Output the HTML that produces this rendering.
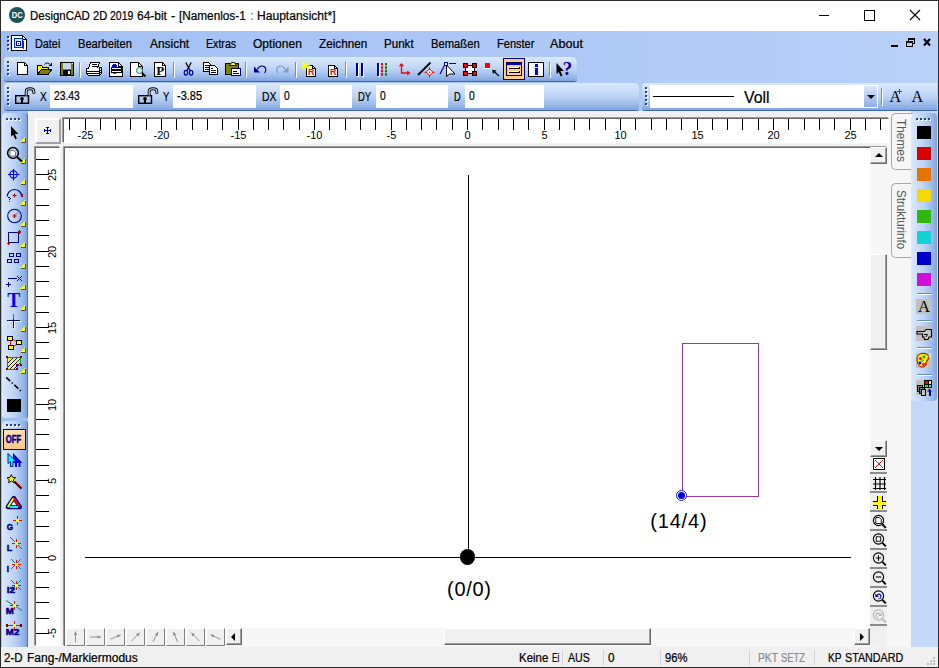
<!DOCTYPE html><html lang="de"><head><meta charset="utf-8"><title>DesignCAD 2D 2019 64-bit - [Namenlos-1 : Hauptansicht*]</title><style>*{box-sizing:border-box;margin:0;padding:0}
html,body{width:939px;height:668px;overflow:hidden;background:#fff}
body{position:relative;font-family:"Liberation Sans",sans-serif;font-size:12px;color:#000}
.a{position:absolute}
.t{position:absolute;white-space:nowrap;line-height:1;transform-origin:0 0;-webkit-text-stroke:.22px currentColor}
#frame{left:0;top:0;width:939px;height:668px;border:1px solid #2b2b2b;border-right-width:1px;z-index:50;pointer-events:none}
#title{left:1px;top:1px;width:937px;height:30px;background:#fff}
.band{position:absolute;left:1px;width:937px;background:linear-gradient(90deg,#a2bff4 0%,#abc6f6 45%,#b9d1f8 100%)}
.tb{position:absolute;border-radius:4px 5px 3px 3px;background:linear-gradient(180deg,#dbe9fc 0%,#cfe0fa 20%,#bdd3f6 50%,#9dbceb 78%,#7fa4de 100%);box-shadow:0 1px 0 #3f66ad}
.vtb{position:absolute;border-radius:4px 3px 2px 3px;background:linear-gradient(90deg,#dbe9fc 0%,#cfe0fa 20%,#bdd3f6 50%,#9dbceb 78%,#7fa4de 100%);box-shadow:1px 0 0 #4a72b8}
.inp{position:absolute;background:#fff}
.gd{position:absolute;width:2px;height:2px;background:#27408b;box-shadow:1px 1px 0 #fff}
.sepv{position:absolute;width:1px;height:15px;background:#6a8ccb;box-shadow:1px 1px 0 #fff}
.seph{position:absolute;height:1px;width:15px;background:#6a8ccb;box-shadow:0 1px 0 #fff}
.tri{position:absolute;width:0;height:0;border-left:5.5px solid transparent;border-bottom:5.5px solid #ffff00;filter:drop-shadow(.8px .8px 0 #505050)}
.btn3{position:absolute;background:#f0f0f0;border:1px solid;border-color:#fff #696969 #696969 #fff;box-shadow:inset -1px -1px 0 #a0a0a0}
.sunk{position:absolute;background:#fff;border-top:1px solid #696969;border-left:1px solid #696969}
.sw{position:absolute;left:917px;width:14px;height:13px}
.tab{position:absolute;left:891px;width:21px;border:1px solid #a8a8a8;border-right:none;border-radius:5px 0 0 5px;background:#f6f6f6}
.vt{position:absolute;white-space:nowrap;line-height:1;font-size:12px;color:#555;transform-origin:0 0}
.rl{position:absolute;white-space:nowrap;line-height:1;font-size:11px}
.sbs{position:absolute;top:650px;width:1px;height:15px;background:#d4d4d4}
.ib{position:absolute;left:870px;width:17px;height:19px;background:#f0f0f0;border-bottom:2px solid #8c8c8c}
svg{position:absolute;left:0;top:0;overflow:visible}
.sunk2{position:absolute;background:#fff;border:1px solid #6a6a6a;border-right-color:#fff;border-bottom-color:#fff;box-shadow:-1px -1px 0 #9a9a9a, 1px 1px 0 #f6f6f6}
</style></head><body>
<div class="a" id="title"></div>
<div class="t" style="left:30.00px;top:9.64px;font-size:12px;transform:scaleX(0.9553);">DesignCAD</div>
<div class="t" style="left:92.60px;top:9.64px;font-size:12px;transform:scaleX(0.9310);">2D</div>
<div class="t" style="left:109.70px;top:9.64px;font-size:12px;transform:scaleX(0.8727);">2019</div>
<div class="t" style="left:136.60px;top:9.64px;font-size:12px;transform:scaleX(0.9967);">64-bit</div>
<div class="t" style="left:171.30px;top:9.64px;font-size:12px;transform:scaleX(1.0945);">-</div>
<div class="t" style="left:179.30px;top:9.64px;font-size:12px;transform:scaleX(0.9803);">[Namenlos-1</div>
<div class="t" style="left:250.90px;top:9.64px;font-size:12px;transform:scaleX(0.5952);">:</div>
<div class="t" style="left:257.20px;top:9.64px;font-size:12px;transform:scaleX(1.0056);">Hauptansicht*]</div>
<div class="band" style="top:31px;height:80px"></div>
<div class="t" style="left:35.30px;top:38.44px;font-size:12px;transform:scaleX(0.9029);">Datei</div>
<div class="t" style="left:78.30px;top:38.44px;font-size:12px;transform:scaleX(0.9273);">Bearbeiten</div>
<div class="t" style="left:149.80px;top:38.44px;font-size:12px;transform:scaleX(0.9959);">Ansicht</div>
<div class="t" style="left:205.70px;top:38.44px;font-size:12px;transform:scaleX(0.8848);">Extras</div>
<div class="t" style="left:252.70px;top:38.44px;font-size:12px;transform:scaleX(1.0037);">Optionen</div>
<div class="t" style="left:318.60px;top:38.44px;font-size:12px;transform:scaleX(0.9761);">Zeichnen</div>
<div class="t" style="left:384.30px;top:38.44px;font-size:12px;transform:scaleX(0.9654);">Punkt</div>
<div class="t" style="left:431.00px;top:38.44px;font-size:12px;transform:scaleX(0.9362);">Bemaßen</div>
<div class="t" style="left:496.90px;top:38.44px;font-size:12px;transform:scaleX(0.9194);">Fenster</div>
<div class="t" style="left:550.30px;top:38.44px;font-size:12px;transform:scaleX(1.0484);">About</div>
<div class="gd" style="left:7px;top:36px"></div>
<div class="gd" style="left:7px;top:40px"></div>
<div class="gd" style="left:7px;top:44px"></div>
<div class="gd" style="left:7px;top:48px"></div>
<div class="tb" style="left:4px;top:57px;width:573px;height:24px"></div>
<div class="tb" style="left:4px;top:83px;width:635px;height:27px"></div>
<div class="tb" style="left:642px;top:83px;width:295px;height:27px;border-radius:4px 0 0 3px"></div>
<div class="gd" style="left:7px;top:61px"></div>
<div class="gd" style="left:7px;top:65px"></div>
<div class="gd" style="left:7px;top:69px"></div>
<div class="gd" style="left:7px;top:73px"></div>
<div class="gd" style="left:7px;top:87px"></div>
<div class="gd" style="left:645px;top:87px"></div>
<div class="gd" style="left:7px;top:91px"></div>
<div class="gd" style="left:645px;top:91px"></div>
<div class="gd" style="left:7px;top:95px"></div>
<div class="gd" style="left:645px;top:95px"></div>
<div class="gd" style="left:7px;top:99px"></div>
<div class="gd" style="left:645px;top:99px"></div>
<div class="gd" style="left:7px;top:103px"></div>
<div class="gd" style="left:645px;top:103px"></div>
<div class="sepv" style="left:79px;top:62px"></div>
<div class="sepv" style="left:173px;top:62px"></div>
<div class="sepv" style="left:245px;top:62px"></div>
<div class="sepv" style="left:295px;top:62px"></div>
<div class="sepv" style="left:345px;top:62px"></div>
<div class="sepv" style="left:549px;top:62px"></div>
<div class="inp" style="left:50px;top:85px;width:83px;height:23px"></div>
<div class="inp" style="left:173px;top:85px;width:83px;height:23px"></div>
<div class="inp" style="left:280px;top:85px;width:72px;height:23px"></div>
<div class="inp" style="left:376px;top:85px;width:72px;height:23px"></div>
<div class="inp" style="left:465px;top:85px;width:79px;height:23px"></div>
<div class="inp" style="left:650px;top:85px;width:228px;height:23px"></div>
<div class="a" style="left:864px;top:86px;width:13px;height:21px;background:linear-gradient(180deg,#dbe9fc,#a9c4ee 60%,#8fb0e4)"></div>
<div class="a" style="left:867px;top:95px;width:0;height:0;border-left:4px solid transparent;border-right:4px solid transparent;border-top:4px solid #000"></div>
<div class="sepv" style="left:881px;top:88px;height:17px"></div>
<div class="t" style="left:39.60px;top:90.94px;font-size:12px;transform:scaleX(0.8396);">X</div>
<div class="t" style="left:162.60px;top:90.94px;font-size:12px;transform:scaleX(0.7895);">Y</div>
<div class="t" style="left:261.90px;top:90.94px;font-size:12px;transform:scaleX(0.8633);">DX</div>
<div class="t" style="left:358.20px;top:90.94px;font-size:12px;transform:scaleX(0.7914);">DY</div>
<div class="t" style="left:454.10px;top:90.94px;font-size:12px;transform:scaleX(0.7755);">D</div>
<div class="t" style="left:53.50px;top:90.14px;font-size:12px;transform:scaleX(0.8616);">23.43</div>
<div class="t" style="left:176.90px;top:90.14px;font-size:12px;transform:scaleX(0.9137);">-3.85</div>
<div class="t" style="left:283.90px;top:90.14px;font-size:12px;transform:scaleX(0.8559);">0</div>
<div class="t" style="left:379.70px;top:90.14px;font-size:12px;transform:scaleX(0.8559);">0</div>
<div class="t" style="left:468.80px;top:90.14px;font-size:12px;transform:scaleX(0.8559);">0</div>
<div class="t" style="left:743.80px;top:88.61px;font-size:17px;transform:scaleX(0.9317);">Voll</div>
<div class="a" style="left:653px;top:96px;width:81px;height:1px;background:#000"></div>
<div class="a" style="left:1px;top:647px;width:937px;height:20px;background:#f0f0f0"></div>
<div class="t" style="left:4.30px;top:651.84px;font-size:12px;transform:scaleX(0.9576);">2-D</div>
<div class="t" style="left:26.90px;top:651.84px;font-size:12px;transform:scaleX(1.0009);">Fang-/Markiermodus</div>
<div class="t" style="left:519.00px;top:651.84px;font-size:12px;transform:scaleX(0.9538);">Keine</div>
<div class="t" style="left:551.80px;top:651.84px;font-size:12px;transform:scaleX(0.6835);">Ei</div>
<div class="t" style="left:567.50px;top:651.84px;font-size:12px;transform:scaleX(0.8840);">AUS</div>
<div class="t" style="left:608.30px;top:651.84px;font-size:12px;transform:scaleX(0.9760);">0</div>
<div class="t" style="left:665.30px;top:651.84px;font-size:12px;transform:scaleX(0.9333);">96%</div>
<div class="t" style="left:757.80px;top:651.84px;font-size:12px;color:#8c8c8c;transform:scaleX(0.8569);">PKT</div>
<div class="t" style="left:781.00px;top:651.84px;font-size:12px;color:#8c8c8c;transform:scaleX(0.7860);">SETZ</div>
<div class="t" style="left:827.70px;top:651.84px;font-size:12px;transform:scaleX(0.8489);">KP</div>
<div class="t" style="left:844.70px;top:651.84px;font-size:12px;transform:scaleX(0.8940);">STANDARD</div>
<div class="sbs" style="left:562px"></div>
<div class="sbs" style="left:603px"></div>
<div class="sbs" style="left:660px"></div>
<div class="sbs" style="left:749px"></div>
<div class="sbs" style="left:814px"></div>
<div class="a" style="left:933px;top:657px;width:2px;height:2px;background:#bdbdbd"></div>
<div class="a" style="left:930px;top:660px;width:2px;height:2px;background:#bdbdbd"></div>
<div class="a" style="left:933px;top:660px;width:2px;height:2px;background:#bdbdbd"></div>
<div class="a" style="left:927px;top:663px;width:2px;height:2px;background:#bdbdbd"></div>
<div class="a" style="left:930px;top:663px;width:2px;height:2px;background:#bdbdbd"></div>
<div class="a" style="left:933px;top:663px;width:2px;height:2px;background:#bdbdbd"></div>
<div class="a" style="left:1px;top:111px;width:27px;height:536px;background:#a2bff4"></div>
<div class="a" style="left:911px;top:111px;width:27px;height:536px;background:#c4d9f9"></div>
<div class="vtb" style="left:2px;top:113px;width:25px;height:305px"></div>
<div class="vtb" style="left:2px;top:421px;width:25px;height:226px;border-radius:4px 3px 0 0"></div>
<div class="gd" style="left:6px;top:118px"></div>
<div class="gd" style="left:6px;top:424px"></div>
<div class="gd" style="left:10px;top:118px"></div>
<div class="gd" style="left:10px;top:424px"></div>
<div class="gd" style="left:14px;top:118px"></div>
<div class="gd" style="left:14px;top:424px"></div>
<div class="gd" style="left:18px;top:118px"></div>
<div class="gd" style="left:18px;top:424px"></div>
<div class="a" style="left:28px;top:111px;width:863px;height:536px;background:#f0f0f0"></div>
<div class="a" style="left:887px;top:111px;width:24px;height:536px;background:#f6f6f6"></div>
<div class="tab" style="top:113px;height:57px"></div>
<div class="tab" style="top:183px;height:75px"></div>
<div class="vt" style="left:906.5px;top:118.6px;transform:rotate(90deg) scaleX(0.99)">Themes</div>
<div class="vt" style="left:906.5px;top:190px;transform:rotate(90deg) scaleX(0.965)">Strukturinfo</div>
<div class="vtb" style="left:911px;top:113px;width:26px;height:288px;border-radius:5px 4px 4px 4px;box-shadow:none"></div>
<div class="gd" style="left:916px;top:117.5px"></div>
<div class="gd" style="left:920px;top:117.5px"></div>
<div class="gd" style="left:924px;top:117.5px"></div>
<div class="gd" style="left:928px;top:117.5px"></div>
<div class="sw" style="top:126px;background:#000000"></div>
<div class="sw" style="top:147px;background:#d80000"></div>
<div class="sw" style="top:168px;background:#e87400"></div>
<div class="sw" style="top:189px;background:#f5d800"></div>
<div class="sw" style="top:210px;background:#30b810"></div>
<div class="sw" style="top:231px;background:#10d4d4"></div>
<div class="sw" style="top:252px;background:#0000cc"></div>
<div class="sw" style="top:273px;background:#d010d8"></div>
<div class="seph" style="left:917px;top:293px"></div>
<div class="seph" style="left:917px;top:320px"></div>
<div class="seph" style="left:917px;top:347px"></div>
<div class="seph" style="left:917px;top:374px"></div>
<div class="a" style="left:916px;top:299px;width:16px;height:15px;background:#c0c0c0"></div>
<div class="a" style="left:916px;top:326px;width:16px;height:15px;background:#c0c0c0"></div>
<div class="a" style="left:916px;top:353px;width:16px;height:15px;background:#c0c0c0"></div>
<div class="a" style="left:916px;top:380px;width:16px;height:15px;background:#c0c0c0"></div>
<div class="a" style="left:35px;top:118px;width:26px;height:26px;background:#f0f0f0;border:2px solid;border-color:#fff #a0a0a0 #a0a0a0 #fff"></div>
<div class="sunk2" style="left:63px;top:118px;width:826px;height:25px"></div>
<div class="sunk2" style="left:35px;top:147px;width:25px;height:499px"></div>
<div class="sunk2" id="canvas" style="left:64px;top:147px;width:823px;height:499px;border-right:none;border-bottom:none"></div>
<div class="a" style="left:69px;top:119px;width:1px;height:11px;background:#000"></div>
<div class="a" style="left:85px;top:119px;width:1px;height:11px;background:#000"></div>
<div class="rl" style="left:77.6px;top:129.7px">-25</div>
<div class="a" style="left:100px;top:119px;width:1px;height:11px;background:#000"></div>
<div class="a" style="left:115px;top:119px;width:1px;height:11px;background:#000"></div>
<div class="a" style="left:130px;top:119px;width:1px;height:11px;background:#000"></div>
<div class="a" style="left:146px;top:119px;width:1px;height:11px;background:#000"></div>
<div class="a" style="left:161px;top:119px;width:1px;height:11px;background:#000"></div>
<div class="rl" style="left:153.6px;top:129.7px">-20</div>
<div class="a" style="left:176px;top:119px;width:1px;height:11px;background:#000"></div>
<div class="a" style="left:192px;top:119px;width:1px;height:11px;background:#000"></div>
<div class="a" style="left:207px;top:119px;width:1px;height:11px;background:#000"></div>
<div class="a" style="left:222px;top:119px;width:1px;height:11px;background:#000"></div>
<div class="a" style="left:238px;top:119px;width:1px;height:11px;background:#000"></div>
<div class="rl" style="left:230.6px;top:129.7px">-15</div>
<div class="a" style="left:253px;top:119px;width:1px;height:11px;background:#000"></div>
<div class="a" style="left:268px;top:119px;width:1px;height:11px;background:#000"></div>
<div class="a" style="left:283px;top:119px;width:1px;height:11px;background:#000"></div>
<div class="a" style="left:299px;top:119px;width:1px;height:11px;background:#000"></div>
<div class="a" style="left:314px;top:119px;width:1px;height:11px;background:#000"></div>
<div class="rl" style="left:306.6px;top:129.7px">-10</div>
<div class="a" style="left:329px;top:119px;width:1px;height:11px;background:#000"></div>
<div class="a" style="left:345px;top:119px;width:1px;height:11px;background:#000"></div>
<div class="a" style="left:360px;top:119px;width:1px;height:11px;background:#000"></div>
<div class="a" style="left:375px;top:119px;width:1px;height:11px;background:#000"></div>
<div class="a" style="left:391px;top:119px;width:1px;height:11px;background:#000"></div>
<div class="rl" style="left:386.6px;top:129.7px">-5</div>
<div class="a" style="left:406px;top:119px;width:1px;height:11px;background:#000"></div>
<div class="a" style="left:421px;top:119px;width:1px;height:11px;background:#000"></div>
<div class="a" style="left:436px;top:119px;width:1px;height:11px;background:#000"></div>
<div class="a" style="left:452px;top:119px;width:1px;height:11px;background:#000"></div>
<div class="a" style="left:467px;top:119px;width:1px;height:11px;background:#000"></div>
<div class="rl" style="left:464.4px;top:129.7px">0</div>
<div class="a" style="left:482px;top:119px;width:1px;height:11px;background:#000"></div>
<div class="a" style="left:498px;top:119px;width:1px;height:11px;background:#000"></div>
<div class="a" style="left:513px;top:119px;width:1px;height:11px;background:#000"></div>
<div class="a" style="left:528px;top:119px;width:1px;height:11px;background:#000"></div>
<div class="a" style="left:544px;top:119px;width:1px;height:11px;background:#000"></div>
<div class="rl" style="left:541.4px;top:129.7px">5</div>
<div class="a" style="left:559px;top:119px;width:1px;height:11px;background:#000"></div>
<div class="a" style="left:574px;top:119px;width:1px;height:11px;background:#000"></div>
<div class="a" style="left:589px;top:119px;width:1px;height:11px;background:#000"></div>
<div class="a" style="left:605px;top:119px;width:1px;height:11px;background:#000"></div>
<div class="a" style="left:620px;top:119px;width:1px;height:11px;background:#000"></div>
<div class="rl" style="left:614.4px;top:129.7px">10</div>
<div class="a" style="left:635px;top:119px;width:1px;height:11px;background:#000"></div>
<div class="a" style="left:651px;top:119px;width:1px;height:11px;background:#000"></div>
<div class="a" style="left:666px;top:119px;width:1px;height:11px;background:#000"></div>
<div class="a" style="left:681px;top:119px;width:1px;height:11px;background:#000"></div>
<div class="a" style="left:697px;top:119px;width:1px;height:11px;background:#000"></div>
<div class="rl" style="left:691.4px;top:129.7px">15</div>
<div class="a" style="left:712px;top:119px;width:1px;height:11px;background:#000"></div>
<div class="a" style="left:727px;top:119px;width:1px;height:11px;background:#000"></div>
<div class="a" style="left:742px;top:119px;width:1px;height:11px;background:#000"></div>
<div class="a" style="left:758px;top:119px;width:1px;height:11px;background:#000"></div>
<div class="a" style="left:773px;top:119px;width:1px;height:11px;background:#000"></div>
<div class="rl" style="left:767.4px;top:129.7px">20</div>
<div class="a" style="left:788px;top:119px;width:1px;height:11px;background:#000"></div>
<div class="a" style="left:804px;top:119px;width:1px;height:11px;background:#000"></div>
<div class="a" style="left:819px;top:119px;width:1px;height:11px;background:#000"></div>
<div class="a" style="left:834px;top:119px;width:1px;height:11px;background:#000"></div>
<div class="a" style="left:850px;top:119px;width:1px;height:11px;background:#000"></div>
<div class="rl" style="left:844.4px;top:129.7px">25</div>
<div class="a" style="left:865px;top:119px;width:1px;height:11px;background:#000"></div>
<div class="a" style="left:880px;top:119px;width:1px;height:11px;background:#000"></div>
<div class="a" style="left:36px;top:633px;width:13px;height:1px;background:#000"></div>
<div class="rl" style="left:47.2px;top:638.4px;transform-origin:0 0;transform:rotate(-90deg)">-5</div>
<div class="a" style="left:36px;top:618px;width:13px;height:1px;background:#000"></div>
<div class="a" style="left:36px;top:602px;width:13px;height:1px;background:#000"></div>
<div class="a" style="left:36px;top:587px;width:13px;height:1px;background:#000"></div>
<div class="a" style="left:36px;top:572px;width:13px;height:1px;background:#000"></div>
<div class="a" style="left:36px;top:557px;width:13px;height:1px;background:#000"></div>
<div class="rl" style="left:47.2px;top:560.6px;transform-origin:0 0;transform:rotate(-90deg)">0</div>
<div class="a" style="left:36px;top:541px;width:13px;height:1px;background:#000"></div>
<div class="a" style="left:36px;top:526px;width:13px;height:1px;background:#000"></div>
<div class="a" style="left:36px;top:511px;width:13px;height:1px;background:#000"></div>
<div class="a" style="left:36px;top:495px;width:13px;height:1px;background:#000"></div>
<div class="a" style="left:36px;top:480px;width:13px;height:1px;background:#000"></div>
<div class="rl" style="left:47.2px;top:483.6px;transform-origin:0 0;transform:rotate(-90deg)">5</div>
<div class="a" style="left:36px;top:465px;width:13px;height:1px;background:#000"></div>
<div class="a" style="left:36px;top:449px;width:13px;height:1px;background:#000"></div>
<div class="a" style="left:36px;top:434px;width:13px;height:1px;background:#000"></div>
<div class="a" style="left:36px;top:419px;width:13px;height:1px;background:#000"></div>
<div class="a" style="left:36px;top:404px;width:13px;height:1px;background:#000"></div>
<div class="rl" style="left:47.2px;top:410.6px;transform-origin:0 0;transform:rotate(-90deg)">10</div>
<div class="a" style="left:36px;top:388px;width:13px;height:1px;background:#000"></div>
<div class="a" style="left:36px;top:373px;width:13px;height:1px;background:#000"></div>
<div class="a" style="left:36px;top:358px;width:13px;height:1px;background:#000"></div>
<div class="a" style="left:36px;top:342px;width:13px;height:1px;background:#000"></div>
<div class="a" style="left:36px;top:327px;width:13px;height:1px;background:#000"></div>
<div class="rl" style="left:47.2px;top:333.6px;transform-origin:0 0;transform:rotate(-90deg)">15</div>
<div class="a" style="left:36px;top:312px;width:13px;height:1px;background:#000"></div>
<div class="a" style="left:36px;top:296px;width:13px;height:1px;background:#000"></div>
<div class="a" style="left:36px;top:281px;width:13px;height:1px;background:#000"></div>
<div class="a" style="left:36px;top:266px;width:13px;height:1px;background:#000"></div>
<div class="a" style="left:36px;top:251px;width:13px;height:1px;background:#000"></div>
<div class="rl" style="left:47.2px;top:257.6px;transform-origin:0 0;transform:rotate(-90deg)">20</div>
<div class="a" style="left:36px;top:235px;width:13px;height:1px;background:#000"></div>
<div class="a" style="left:36px;top:220px;width:13px;height:1px;background:#000"></div>
<div class="a" style="left:36px;top:205px;width:13px;height:1px;background:#000"></div>
<div class="a" style="left:36px;top:189px;width:13px;height:1px;background:#000"></div>
<div class="a" style="left:36px;top:174px;width:13px;height:1px;background:#000"></div>
<div class="rl" style="left:47.2px;top:180.6px;transform-origin:0 0;transform:rotate(-90deg)">25</div>
<div class="a" style="left:36px;top:159px;width:13px;height:1px;background:#000"></div>
<div class="a" style="left:870px;top:147px;width:17px;height:310px;background:conic-gradient(#fff 25%,#f0f0f0 0 50%,#fff 0 75%,#f0f0f0 0) 0 0/2px 2px"></div>
<div class="a" style="left:226px;top:628px;width:644px;height:18px;background:conic-gradient(#fff 25%,#f0f0f0 0 50%,#fff 0 75%,#f0f0f0 0) 0 0/2px 2px"></div>
<div class="btn3" style="left:870px;top:147px;width:17px;height:17px"></div>
<div class="btn3" style="left:870px;top:440px;width:17px;height:17px"></div>
<div class="btn3" style="left:870px;top:254px;width:17px;height:96px"></div>
<div class="a" style="left:875px;top:153px;width:0;height:0;border-left:4px solid transparent;border-right:4px solid transparent;border-bottom:4px solid #000"></div>
<div class="a" style="left:875px;top:447px;width:0;height:0;border-left:4px solid transparent;border-right:4px solid transparent;border-top:4px solid #000"></div>
<div class="btn3" style="left:226px;top:628px;width:16px;height:17px"></div>
<div class="btn3" style="left:854px;top:628px;width:16px;height:17px"></div>
<div class="btn3" style="left:444px;top:628px;width:207px;height:17px"></div>
<div class="a" style="left:231px;top:633px;width:0;height:0;border-top:4px solid transparent;border-bottom:4px solid transparent;border-right:4px solid #000"></div>
<div class="a" style="left:860px;top:633px;width:0;height:0;border-top:4px solid transparent;border-bottom:4px solid transparent;border-left:4px solid #000"></div>
<div class="btn3" style="left:66px;top:628px;width:19px;height:18px;border-color:#fff #808080 #808080 #fff;box-shadow:none"></div>
<div class="btn3" style="left:86px;top:628px;width:19px;height:18px;border-color:#fff #808080 #808080 #fff;box-shadow:none"></div>
<div class="btn3" style="left:106px;top:628px;width:19px;height:18px;border-color:#fff #808080 #808080 #fff;box-shadow:none"></div>
<div class="btn3" style="left:126px;top:628px;width:19px;height:18px;border-color:#fff #808080 #808080 #fff;box-shadow:none"></div>
<div class="btn3" style="left:146px;top:628px;width:19px;height:18px;border-color:#fff #808080 #808080 #fff;box-shadow:none"></div>
<div class="btn3" style="left:166px;top:628px;width:19px;height:18px;border-color:#fff #808080 #808080 #fff;box-shadow:none"></div>
<div class="btn3" style="left:186px;top:628px;width:19px;height:18px;border-color:#fff #808080 #808080 #fff;box-shadow:none"></div>
<div class="btn3" style="left:206px;top:628px;width:19px;height:18px;border-color:#fff #808080 #808080 #fff;box-shadow:none"></div>
<div class="a" style="left:870px;top:457px;width:17px;height:189px;background:#f0f0f0"></div>
<div class="ib" style="top:457px;height:17px"></div>
<div class="ib" style="top:474px;height:19px"></div>
<div class="ib" style="top:493px;height:19px"></div>
<div class="ib" style="top:512px;height:19px"></div>
<div class="ib" style="top:531px;height:19px"></div>
<div class="ib" style="top:550px;height:19px"></div>
<div class="ib" style="top:569px;height:19px"></div>
<div class="ib" style="top:588px;height:19px"></div>
<div class="ib" style="top:607px;height:19px"></div>
<div class="a" style="left:468px;top:175px;width:1px;height:382px;background:#000"></div>
<div class="a" style="left:85px;top:557px;width:766px;height:1px;background:#000"></div>
<div class="a" style="left:459.8px;top:549px;width:15.5px;height:15.6px;border-radius:50%;background:#000"></div>
<div class="a" style="left:682px;top:343px;width:77px;height:154px;border:1px solid #9a3a9a"></div>
<div class="a" style="left:676px;top:490px;width:11px;height:11px;border-radius:50%;border:1px solid #1a1ad0;background:#fff"></div>
<div class="a" style="left:678px;top:492px;width:7px;height:7px;border-radius:50%;background:#0000e0"></div>
<div class="t" style="left:650.30px;top:511.07px;font-size:20px;letter-spacing:0.800px;-webkit-text-stroke:0">(14/4)</div>
<div class="t" style="left:447.10px;top:579.07px;font-size:20px;letter-spacing:0.700px;-webkit-text-stroke:0">(0/0)</div>
<svg width="939" height="668" viewBox="0 0 939 668" shape-rendering="crispEdges" fill="none" stroke-width="1">
<path d="M819 15.5h10M864.5 10.5h10v10h-10z" stroke="#000"/>
<path d="M910 10l10 10M920 10l-10 10" stroke="#000" shape-rendering="geometricPrecision" stroke-width="1.1"/>
<rect x="891" y="45" width="7" height="2" fill="#000"/>
<path d="M908.5 41v-2.5h6v5h-2" stroke="#000"/><rect x="908" y="38" width="7" height="2" fill="#000"/><rect x="906.5" y="41.500" width="6" height="4.500" stroke="#000"/><rect x="906" y="41" width="7" height="2" fill="#000"/>
<path d="M924 39l6 6.500M930 39l-6 6.500" stroke="#000" stroke-width="2.200" shape-rendering="geometricPrecision"/>
<circle cx="17" cy="15" r="8" fill="#1f5558" shape-rendering="geometricPrecision"/>
<text x="17.200" y="18.300" font-family="Liberation Sans,sans-serif" font-weight="bold" font-size="9.300" fill="#fff" text-anchor="middle" textLength="11" lengthAdjust="spacingAndGlyphs">DC</text>
<path d="M11.5 35.500h11l4 4v11h-15z" fill="#fff" stroke="#000"/><path d="M22.500 35.500v4h4" stroke="#000"/>
<rect x="14.500" y="38.500" width="8" height="9" fill="#c8e8ff" stroke="#0030c0"/><rect x="16.500" y="41.500" width="4" height="4" fill="#fff" stroke="#0000c0"/><rect x="18" y="43" width="1" height="1" fill="#0000c0"/><path d="M23.500 40.500v8" stroke="#0030c0"/>
<path d="M17.5 62.500h7l3 3v9h-10z" fill="#fff" stroke="#000"/><path d="M24.500 62.500v3h3" stroke="#000"/>
<path d="M37.500 74.500v-9h4l1 1.500h6v2.500" fill="#ffff00" stroke="#000"/><path d="M37.500 74.500l4-5.500h10.500l-4 5.500z" fill="#808000" stroke="#000"/>
<path d="M44.500 64.500c1.500-2 4.500-2 6 .5" stroke="#000" shape-rendering="geometricPrecision"/><path d="M48.500 65.500h3v-3" stroke="#000"/>
<rect x="60.500" y="62.500" width="13" height="13" fill="#808000" stroke="#000"/><rect x="63" y="63" width="8" height="6" fill="#c3d4f0"/><rect x="63" y="70" width="8" height="5" fill="#000"/><rect x="68" y="71" width="2" height="3" fill="#fff"/><rect x="72" y="63" width="1" height="1" fill="#fff"/>
<path d="M90.500 62.500h9l-2 5.500h-9z" fill="#fff" stroke="#000"/><path d="M92 64.500h5M91.500 66h5" stroke="#000"/>
<path d="M88.500 68.500h-2v5l2 2h11l2-2v-6h-3" fill="#fff" stroke="#000"/><path d="M86.500 71.500h13l2-2M86.500 73.500h13l2-2M99.500 68v7" stroke="#000"/>
<path d="M109.500 62.500h9l4 4v9.500h-13z" fill="#fff" stroke="#000"/><path d="M118.500 62.500v4h4" stroke="#000"/>
<rect x="112" y="65" width="5" height="2" fill="#0000ff"/><rect x="113" y="64" width="3" height="1" fill="#0000ff"/><rect x="111.500" y="67.500" width="10" height="5" fill="#fff" stroke="#000"/><rect x="112" y="69" width="9" height="2" fill="#000"/><rect x="113" y="73" width="3" height="1" fill="#ff0000"/><rect x="116" y="73" width="2" height="1" fill="#ffff00"/><rect x="121" y="68" width="2" height="3" fill="#000"/>
<path d="M130.500 62.500h8l4 4v9.500h-12z" fill="#fff" stroke="#000"/><path d="M138.500 62.500v4h4" stroke="#000"/>
<circle cx="139.500" cy="70.500" r="3" fill="#b0ffff" stroke="#606060" shape-rendering="geometricPrecision"/><path d="M142 73l3.500 3.500" stroke="#000" stroke-width="2" shape-rendering="geometricPrecision"/>
<path d="M154.500 62.500h8l3 3v10.500h-11z" fill="#fff" stroke="#000"/><path d="M162.500 62.500v3h3" stroke="#000"/>
<text x="156.300" y="74.500" font-family="Liberation Serif,serif" font-weight="bold" font-size="13" fill="#000" stroke="none">P</text>
<g shape-rendering="geometricPrecision"><path d="M185.800 62.500l4.200 8M191.200 62.500l-4.200 8" stroke="#000" stroke-width="1.300"/><ellipse cx="185.900" cy="72.800" rx="1.700" ry="2.400" stroke="#0000a0" stroke-width="1.200"/><ellipse cx="191.100" cy="72.800" rx="1.700" ry="2.400" stroke="#0000a0" stroke-width="1.200"/></g>
<path d="M203.500 62.500h5l3 3v6h-8z" fill="#fff" stroke="#000"/><path d="M205 65.500h4M205 67.500h4M205 69.500h4" stroke="#000"/>
<path d="M209.500 65.500h5l3 3v6h-8z" fill="#fff" stroke="#000"/><path d="M211 68.500h2M211 70.500h5M211 72.500h5" stroke="#000"/>
<rect x="225.500" y="63.500" width="13" height="11" rx="1" fill="#808000" stroke="#000"/><path d="M229.500 65.500l2-3h3l2 3z" fill="#ffff00" stroke="#000" shape-rendering="geometricPrecision" stroke-width=".9"/>
<rect x="231.500" y="68.500" width="9" height="7" fill="#fff" stroke="#000080"/><path d="M233 71.500h4M233 73.500h6" stroke="#000"/>
<g shape-rendering="geometricPrecision"><path d="M257.500 69.500c1-4 7-5 8.300-.5c.3 2-.3 3-1.300 4" stroke="#00008b" stroke-width="1.100"/><path d="M254 66.500v6h6z" fill="#00008b"/></g>
<g shape-rendering="geometricPrecision"><path d="M285 69.500c-1-4-7-5-8.300-.5c-.3 2 .3 3 1.300 4" stroke="#7f9acb" stroke-width="1.100"/><path d="M288.500 66.500v6h-6z" fill="#7f9acb"/></g>
<path d="M306.500 65.500h6l3 3v8h-9z" fill="#fff" stroke="#000"/><path d="M312.500 65.500v3h3" stroke="#000"/>
<text x="308" y="75" font-family="Liberation Sans,sans-serif" font-weight="bold" font-size="9" fill="#ff0000" stroke="none">R</text>
<path d="M305.500 61.500v9M301 66h9M302.300 62.800l6.400 6.400M308.700 62.800l-6.400 6.400" stroke="#ffff00" stroke-width="1.300" shape-rendering="geometricPrecision"/>
<path d="M328.500 65.500h6l3 3v8h-9z" fill="#fff" stroke="#000"/><path d="M334.500 65.500v3h3" stroke="#000"/>
<text x="330" y="75" font-family="Liberation Sans,sans-serif" font-weight="bold" font-size="9" fill="#ff0000" stroke="none">R</text>
<rect x="357" y="64" width="2" height="13" fill="#fff"/><rect x="362" y="64" width="2" height="13" fill="#fff"/><rect x="356" y="63" width="2" height="13" fill="#00008b"/><rect x="361" y="63" width="2" height="13" fill="#00008b"/>
<rect x="378" y="64" width="2" height="13" fill="#fff"/><rect x="377" y="63" width="2" height="13" fill="#00008b"/>
<rect x="381" y="63" width="2" height="2.400" fill="#ff0000" shape-rendering="geometricPrecision"/><rect x="385" y="63" width="2" height="2.400" fill="#008000" shape-rendering="geometricPrecision"/>
<rect x="381" y="66.4" width="2" height="2.400" fill="#ff0000" shape-rendering="geometricPrecision"/><rect x="385" y="66.4" width="2" height="2.400" fill="#008000" shape-rendering="geometricPrecision"/>
<rect x="381" y="69.8" width="2" height="2.400" fill="#ff0000" shape-rendering="geometricPrecision"/><rect x="385" y="69.8" width="2" height="2.400" fill="#008000" shape-rendering="geometricPrecision"/>
<rect x="381" y="73.2" width="2" height="2.400" fill="#ff0000" shape-rendering="geometricPrecision"/><rect x="385" y="73.2" width="2" height="2.400" fill="#008000" shape-rendering="geometricPrecision"/>
<path d="M401.500 64v9h7.500" stroke="#ff0000" stroke-width="1.300" shape-rendering="geometricPrecision"/><path d="M398.800 66.300l2.700-3.300l2.700 3.300zM407.200 70.600l3.300 2.400l-3.300 2.400z" fill="#ff0000" shape-rendering="geometricPrecision"/>
<g shape-rendering="geometricPrecision"><path d="M418 75l12.500-12.500" stroke="#000" stroke-width="1.800"/><path d="M429.500 68.800l3.500 3.500l-3.500 3.500l-3.500-3.500z" stroke="#ff0000" stroke-width="1" fill="#fff"/><path d="M429.500 67.300v2.500M429.500 74.800v2.500M424.500 72.300h2.500M432 72.300h2.500" stroke="#ff0000"/><circle cx="429.500" cy="72.300" r=".8" fill="#ff0000"/></g>
<g shape-rendering="geometricPrecision"><path d="M440 74l5-9.500M449 63.500h7" stroke="#0000d0" stroke-width="1.200"/><path d="M446.500 65v11.500l3-2.500h5.500z" fill="#fff" stroke="#000"/></g><rect x="444.500" y="62.500" width="3" height="3" fill="#fff" stroke="#0000ff"/>
<rect x="465.500" y="65.500" width="9" height="8" fill="#fff" stroke="#000"/>
<rect x="463.5" y="63.5" width="4" height="4" fill="#ff0000" stroke="#000"/>
<rect x="472.5" y="63.5" width="4" height="4" fill="#ff0000" stroke="#000"/>
<rect x="463.5" y="71.5" width="4" height="4" fill="#ff0000" stroke="#000"/>
<rect x="472.5" y="71.5" width="4" height="4" fill="#ff0000" stroke="#000"/>
<rect x="485" y="63" width="5" height="5" fill="#ff0000"/><rect x="485" y="68" width="5" height="1" fill="#fff"/>
<g shape-rendering="geometricPrecision"><path d="M493 70.500l6 5.500" stroke="#000" stroke-width="1.200"/><path d="M492.300 69.800l4.200.6l-3.600 3.600z" fill="#000"/></g>
<rect x="503.500" y="58.500" width="21" height="21" fill="#ffcb85" stroke="#00008b"/>
<rect x="506.500" y="62.500" width="15" height="13" stroke="#000060" fill="#ffcb85"/><rect x="507" y="63" width="14" height="2" fill="#0000c8"/>
<path d="M509 67.500h10M509 71.500h10" stroke="#fff"/><path d="M509 68.500h10.500v-2M509 72.500h10.500v-2" stroke="#000"/>
<rect x="528.500" y="62.500" width="15" height="14" fill="#fff" stroke="#000"/><rect x="535" y="68" width="3" height="7" fill="#0000ff"/><rect x="535" y="64" width="3" height="3" fill="#0000ff"/>
<path d="M556.500 63V74L558.700 71.900L560.700 76.400L562.400 75.600L560.400 71.100H563.800Z" fill="#000" shape-rendering="geometricPrecision"/>
<text x="562.800" y="75.400" font-family="Liberation Serif,serif" font-weight="bold" font-size="19" fill="#00008b" stroke="none">?</text>
<rect x="15.7" y="95.700" width="12.800" height="7.600" fill="none" stroke="#000" stroke-width="1.400" shape-rendering="geometricPrecision"/><path d="M22 96.900a1.800 1.800 0 0 1 1 3.300v3h-2v-3a1.800 1.800 0 0 1 1-3.300z" fill="#000" shape-rendering="geometricPrecision"/>
<path d="M26.2 95v-3.500c0-3.600 7.600-3.600 7.600 0v2.300" stroke="#000" stroke-width="2.900" shape-rendering="geometricPrecision"/><path d="M26.2 95.500v-4c0-3.600 7.600-3.600 7.600 0v1.700" stroke="#d4e3fa" stroke-width="1.100" shape-rendering="geometricPrecision"/>
<rect x="138.7" y="95.700" width="12.800" height="7.600" fill="none" stroke="#000" stroke-width="1.400" shape-rendering="geometricPrecision"/><path d="M145 96.900a1.800 1.800 0 0 1 1 3.300v3h-2v-3a1.800 1.800 0 0 1 1-3.300z" fill="#000" shape-rendering="geometricPrecision"/>
<path d="M149.2 95v-3.500c0-3.600 7.600-3.600 7.600 0v2.300" stroke="#000" stroke-width="2.900" shape-rendering="geometricPrecision"/><path d="M149.2 95.500v-4c0-3.600 7.600-3.600 7.600 0v1.700" stroke="#d4e3fa" stroke-width="1.100" shape-rendering="geometricPrecision"/>
<text x="889.500" y="102" font-family="Liberation Serif,serif" font-size="16" fill="#000" stroke="none">A</text>
<text x="911.500" y="102" font-family="Liberation Serif,serif" font-size="16" fill="#000" stroke="none">A</text>
<path d="M899.500 89v5M897 91.500h5" stroke="#ff0000"/>
<path d="M25.300 136.7V142.3H19.700z" fill="#ffff00" shape-rendering="geometricPrecision"/><rect x="25" y="138" width="1" height="5" fill="#4a4a4a"/><rect x="21" y="142" width="5" height="1" fill="#4a4a4a"/>
<path d="M25.300 157.7V163.3H19.700z" fill="#ffff00" shape-rendering="geometricPrecision"/><rect x="25" y="159" width="1" height="5" fill="#4a4a4a"/><rect x="21" y="163" width="5" height="1" fill="#4a4a4a"/>
<path d="M25.300 178.7V184.3H19.700z" fill="#ffff00" shape-rendering="geometricPrecision"/><rect x="25" y="180" width="1" height="5" fill="#4a4a4a"/><rect x="21" y="184" width="5" height="1" fill="#4a4a4a"/>
<path d="M25.300 199.7V205.3H19.700z" fill="#ffff00" shape-rendering="geometricPrecision"/><rect x="25" y="201" width="1" height="5" fill="#4a4a4a"/><rect x="21" y="205" width="5" height="1" fill="#4a4a4a"/>
<path d="M25.300 220.7V226.3H19.700z" fill="#ffff00" shape-rendering="geometricPrecision"/><rect x="25" y="222" width="1" height="5" fill="#4a4a4a"/><rect x="21" y="226" width="5" height="1" fill="#4a4a4a"/>
<path d="M25.300 241.7V247.3H19.700z" fill="#ffff00" shape-rendering="geometricPrecision"/><rect x="25" y="243" width="1" height="5" fill="#4a4a4a"/><rect x="21" y="247" width="5" height="1" fill="#4a4a4a"/>
<path d="M25.300 262.7V268.3H19.700z" fill="#ffff00" shape-rendering="geometricPrecision"/><rect x="25" y="264" width="1" height="5" fill="#4a4a4a"/><rect x="21" y="268" width="5" height="1" fill="#4a4a4a"/>
<path d="M25.300 283.7V289.3H19.700z" fill="#ffff00" shape-rendering="geometricPrecision"/><rect x="25" y="285" width="1" height="5" fill="#4a4a4a"/><rect x="21" y="289" width="5" height="1" fill="#4a4a4a"/>
<path d="M25.300 304.7V310.3H19.700z" fill="#ffff00" shape-rendering="geometricPrecision"/><rect x="25" y="306" width="1" height="5" fill="#4a4a4a"/><rect x="21" y="310" width="5" height="1" fill="#4a4a4a"/>
<path d="M25.300 325.7V331.3H19.700z" fill="#ffff00" shape-rendering="geometricPrecision"/><rect x="25" y="327" width="1" height="5" fill="#4a4a4a"/><rect x="21" y="331" width="5" height="1" fill="#4a4a4a"/>
<path d="M25.300 346.7V352.3H19.700z" fill="#ffff00" shape-rendering="geometricPrecision"/><rect x="25" y="348" width="1" height="5" fill="#4a4a4a"/><rect x="21" y="352" width="5" height="1" fill="#4a4a4a"/>
<path d="M25.300 367.7V373.3H19.700z" fill="#ffff00" shape-rendering="geometricPrecision"/><rect x="25" y="369" width="1" height="5" fill="#4a4a4a"/><rect x="21" y="373" width="5" height="1" fill="#4a4a4a"/>
<path d="M11 126V136.800L13.200 134.700L15.200 139.200L16.900 138.400L14.900 133.900H18.300Z" fill="#000" shape-rendering="geometricPrecision"/>
<g shape-rendering="geometricPrecision"><circle cx="13" cy="153" r="5.400" stroke="#000" stroke-width="1.500"/><path d="M10 150.500h3.500l2 2v3.500h-5.500z" fill="#fff" stroke="#404040" stroke-width=".7"/><path d="M17 157l5 4.500" stroke="#000" stroke-width="2.200"/></g>
<g shape-rendering="geometricPrecision" stroke="#0000ff" stroke-width="1.100"><circle cx="13.500" cy="174.500" r="3.600"/><path d="M8 174.500h11.500M13.500 169v11.500"/></g>
<g shape-rendering="geometricPrecision"><path d="M7.300 196.500a7.200 7.200 0 0 1 14.300-1" stroke="#00008b" stroke-width="1.200"/><path d="M12.500 195.500h4M14.500 193.500v4" stroke="#c00000" stroke-width="1.200"/></g><rect x="21" y="194" width="2" height="3" fill="#a00000"/><rect x="8" y="197" width="2" height="1" fill="#00008b"/><rect x="10" y="198" width="1" height="1" fill="#00008b"/><rect x="9" y="199" width="1" height="1" fill="#00008b"/><rect x="9" y="201" width="1" height="1" fill="#00008b"/>
<g shape-rendering="geometricPrecision"><circle cx="14.500" cy="216" r="6.800" stroke="#00008b" stroke-width="1.100"/><path d="M15 215.500l4.500-4.500" stroke="#808080"/><path d="M12.500 216h4M14.500 214v4" stroke="#c00000" stroke-width="1.200"/></g>
<rect x="8.500" y="232.500" width="10" height="10" stroke="#00008b"/><rect x="18" y="231" width="3" height="2" fill="#c00000"/><rect x="19" y="230" width="1" height="4" fill="#c00000"/><rect x="7" y="243" width="3" height="1" fill="#c00000"/><rect x="8" y="242" width="1" height="3" fill="#c00000"/>
<rect x="9.5" y="253.5" width="4" height="3" stroke="#00008b"/>
<rect x="16.5" y="253.5" width="4" height="3" stroke="#00008b"/>
<rect x="7.5" y="259.5" width="4" height="3" stroke="#00008b"/>
<rect x="14.5" y="259.5" width="4" height="3" stroke="#00008b"/>
<path d="M8 278.500h9M6 284.500h5M8.500 282v5" stroke="#00008b"/><path d="M17 276l5 5M22 276l-5 5" stroke="#00008b" shape-rendering="geometricPrecision"/>
<text x="7.200" y="307.300" font-family="Liberation Serif,serif" font-weight="bold" font-size="20" fill="#0000ff" stroke="none" textLength="13" lengthAdjust="spacingAndGlyphs">T</text>
<path d="M8 321.500h13M14.500 320v9" stroke="#fff"/><path d="M13.500 314v5" stroke="#ff00ff"/><path d="M13.500 319v9M7 320.500h13" stroke="#00008b"/>
<path d="M12 338.500l5 3.500M10.500 341v5M12.500 347l5-3" stroke="#ff0000" shape-rendering="geometricPrecision"/>
<rect x="7.5" y="336.5" width="5" height="4" fill="#ffff00" stroke="#000"/>
<rect x="16.5" y="340.5" width="5" height="4" fill="#ffff00" stroke="#000"/>
<rect x="8.5" y="345.5" width="5" height="4" fill="#ffff00" stroke="#000"/>
<path d="M7.500 357.500h13v8h-3v4h-10z" fill="#ffff00" stroke="#00a000"/><g shape-rendering="geometricPrecision" stroke="#0000c0" stroke-width="1"><path d="M8 363l5-5M8 367l9-9M10 369l10-10M14 369l6-6"/></g>
<rect x="6" y="356" width="2" height="2" fill="#800000"/>
<rect x="20" y="356" width="2" height="2" fill="#800000"/>
<rect x="6" y="368" width="2" height="2" fill="#800000"/>
<rect x="16" y="368" width="2" height="2" fill="#800000"/>
<rect x="20" y="364" width="2" height="2" fill="#800000"/>
<rect x="16" y="364" width="2" height="2" fill="#800000"/>
<path d="M6.200 377.400l15.600 14.400" stroke="#000" stroke-width="1.500" stroke-dasharray="5.500 2 1.500 2" shape-rendering="geometricPrecision"/>
<rect x="7" y="399" width="14" height="13" fill="#000"/>
<defs><linearGradient id="og" x1="0" y1="0" x2="0" y2="1"><stop offset="0" stop-color="#ffe0b8"/><stop offset="1" stop-color="#ffc680"/></linearGradient></defs>
<rect x="3.500" y="429.500" width="22" height="20" fill="url(#og)" stroke="#00008b"/>
<text x="5.800" y="443.200" font-family="Liberation Sans,sans-serif" font-weight="bold" font-size="10" fill="#00008b" stroke="#00008b" stroke-width=".5" textLength="15.400" lengthAdjust="spacingAndGlyphs">OFF</text>
<g shape-rendering="geometricPrecision"><path d="M13 453v10h2v4h2v-4h1.500v4h2v-4h2z" fill="#0000e0"/><path d="M8 453.500v10l2.500-2v5h2.500v-5h3z" fill="#00ffff" stroke="#0000c0" stroke-width=".9"/></g>
<g shape-rendering="geometricPrecision"><path d="M14.500 481.500l7 7" stroke="#000" stroke-width="2.200"/><path d="M15 481l6.500 6.500" stroke="#ff0000" stroke-width="1"/><path d="M11.300 474.700l1.300 2.700l3 .3l-2.200 2l.7 3l-2.800-1.600l-2.700 1.600l.6-3l-2.200-2l3-.3z" fill="#ffff00" stroke="#000" stroke-width=".9"/></g>
<g shape-rendering="geometricPrecision" stroke-linecap="round" stroke-linejoin="round"><path d="M13.800 498l-6 9h12z" stroke="#00008b" stroke-width="4.400"/><path d="M13.200 498.800l-5 7.700" stroke="#ffff00" stroke-width="2"/><path d="M14.400 498.800l5 7.700" stroke="#ff0000" stroke-width="2"/><path d="M9.500 507h8.600" stroke="#00ffff" stroke-width="2" stroke-linecap="butt"/><path d="M13.800 502l-2 3h4z" fill="#fff" stroke="#fff" stroke-width=".5"/></g>
<path d="M13 520.5h9M17.5 516v9" stroke="#ff0000"/><rect x="16" y="519" width="3" height="3" fill="#ffff00"/><text x="6.8" y="529.7" font-family="Liberation Sans,sans-serif" font-weight="bold" font-size="9" fill="#00008b" stroke="#00008b" stroke-width=".5" textLength="6.4" lengthAdjust="spacingAndGlyphs">G</text>
<path d="M10 537l12 12" stroke="#008080" shape-rendering="geometricPrecision"/><path d="M12 543.5h9M16.5 539v9" stroke="#ff0000"/><rect x="15" y="542" width="3" height="3" fill="#ffff00"/><text x="6.8" y="550.8" font-family="Liberation Sans,sans-serif" font-weight="bold" font-size="9" fill="#00008b" stroke="#00008b" stroke-width=".5" textLength="5.5" lengthAdjust="spacingAndGlyphs">L</text>
<path d="M11 559l10 10M21 559l-10 10" stroke="#008080" shape-rendering="geometricPrecision"/><path d="M12 564.5h9M16.5 560v9" stroke="#ff0000"/><rect x="15" y="563" width="3" height="3" fill="#ffff00"/><text x="6.8" y="572" font-family="Liberation Sans,sans-serif" font-weight="bold" font-size="9" fill="#00008b" stroke="#00008b" stroke-width=".5" textLength="2.2" lengthAdjust="spacingAndGlyphs">I</text>
<path d="M11 580l10 10M21 580l-10 10" stroke="#008080" shape-rendering="geometricPrecision"/><path d="M12 585.5h9M16.5 581v9" stroke="#ff0000"/><rect x="15" y="584" width="3" height="3" fill="#ffff00"/><text x="6.8" y="593" font-family="Liberation Sans,sans-serif" font-weight="bold" font-size="9" fill="#00008b" stroke="#00008b" stroke-width=".5" textLength="8.5" lengthAdjust="spacingAndGlyphs">I2</text>
<path d="M6 600.500l16 10" stroke="#008080" shape-rendering="geometricPrecision"/><path d="M10 605.5h9M14.5 601v9" stroke="#ff0000"/><rect x="13" y="604" width="3" height="3" fill="#ffff00"/><text x="5.8" y="614" font-family="Liberation Sans,sans-serif" font-weight="bold" font-size="9" fill="#00008b" stroke="#00008b" stroke-width=".5" textLength="8" lengthAdjust="spacingAndGlyphs">M</text>
<path d="M6 625.500h16" stroke="#ff0000"/><path d="M10 625.5h9M14.5 621v9" stroke="#ff0000"/><rect x="13" y="624" width="3" height="3" fill="#ffff00"/><rect x="6" y="624" width="2" height="3" fill="#800000"/><rect x="20" y="624" width="2" height="3" fill="#800000"/><text x="5.8" y="635" font-family="Liberation Sans,sans-serif" font-weight="bold" font-size="9" fill="#00008b" stroke="#00008b" stroke-width=".5" textLength="13.5" lengthAdjust="spacingAndGlyphs">M2</text>
<path d="M44 130.500h7M47.500 127v7M44.500 129v3M50.500 129v3M46 127.500h3M46 133.500h3" stroke="#00008b"/>
<text x="918" y="312" font-family="Liberation Serif,serif" font-size="17" fill="#000" stroke="none" textLength="12" lengthAdjust="spacingAndGlyphs">A</text>
<g shape-rendering="geometricPrecision"><path d="M917 331.500h7.500l1.500-2h5.500v7.500h-2.500l-1 2.500h-3.500l-.5-2.500h-1.500v-3h-5.500z" fill="#c8c8c8" stroke="#000" stroke-width="1.100"/><path d="M924 334.500h3.500l-1.500 2.500" stroke="#000" stroke-width=".9" fill="none"/></g>
<g shape-rendering="geometricPrecision"><path d="M917 359c0-4 4-6.500 8-5.500c3 .8 4.500 3 3.500 5.500c-.6 1.500-2 1.500-2 3c0 2.500-1 5-4.500 5c-3 0-5-4-5-8z" fill="#ffee00" stroke="#900000" stroke-width="1"/><circle cx="920.500" cy="358.500" r="1.500" fill="#ff0000"/><circle cx="924" cy="357" r="1.400" fill="#00b000"/><circle cx="920" cy="363" r="1.400" fill="#0000ff"/><circle cx="923.500" cy="364.500" r="1.400" fill="#ff0000"/><circle cx="922.500" cy="360.500" r="1.200" fill="#00c8c8"/><path d="M930 355l-5 10" stroke="#c04000" stroke-width="1.500"/><path d="M930.800 353.500l-1.500 4" stroke="#e0e0e0" stroke-width="1.800"/></g>
<rect x="917.500" y="385.500" width="5" height="6" fill="#808080" stroke="#000"/><rect x="919.500" y="387.500" width="5" height="6" fill="#408080" stroke="#000"/><rect x="921.500" y="389.500" width="4" height="6" fill="#c0c0c0" stroke="#000"/>
<rect x="924" y="380" width="8" height="8" fill="#000"/><rect x="925" y="381" width="3" height="3" fill="#ff0000"/><rect x="929" y="381" width="2" height="3" fill="#ffff00"/><rect x="925" y="385" width="3" height="2" fill="#00ff00"/><rect x="929" y="385" width="2" height="2" fill="#00ffff"/>
<path d="M929.500 391v4.500" stroke="#0000a0" stroke-width="2"/><path d="M927 391.500l2.500-3l2.500 3z" fill="#0000a0" shape-rendering="geometricPrecision"/>
<rect x="873.500" y="458.500" width="11" height="11" fill="#fff" stroke="#000"/><path d="M875 460l8 8M883 460l-8 8" stroke="#ff0000" shape-rendering="geometricPrecision"/>
<path d="M873 479.500h13M873 484h13M873 488.500h13M875.500 477v13M880 477v13M884.500 477v13" stroke="#000" stroke-width="1.150" shape-rendering="geometricPrecision"/>
<rect x="878" y="496" width="4" height="13" fill="#ffff00" stroke="none"/><rect x="873" y="501" width="13" height="3.500" fill="#ffff00"/><path d="M877.500 496v5h-4.500M882.500 496v5h3.500M877.500 509v-4h-4.500M882.500 509v-4h3.500" stroke="#000" stroke-width="1"/>
<g shape-rendering="geometricPrecision"><circle cx="878.500" cy="520.5" r="5.100" stroke="#000" stroke-width="1.150" fill="#f0f0f0"/><path d="M882.500 524.5l3.300 3.300" stroke="#000" stroke-width="1.800"/><path d="M875.800 517.500h3.500l2 2v4h-5.500z" fill="#fff" stroke="#000" stroke-width=".9"/></g>
<g shape-rendering="geometricPrecision"><circle cx="878.500" cy="539" r="5.100" stroke="#000" stroke-width="1.150" fill="#f0f0f0"/><path d="M882.500 543l3.300 3.300" stroke="#000" stroke-width="1.800"/><rect x="876.300" y="536.800" width="4.400" height="4.400" fill="#fff" stroke="#000" stroke-width=".9"/></g>
<g shape-rendering="geometricPrecision"><circle cx="878.500" cy="558" r="5.100" stroke="#000" stroke-width="1.150" fill="#f0f0f0"/><path d="M882.500 562l3.300 3.300" stroke="#000" stroke-width="1.800"/><path d="M875.800 558h5.400M878.500 555.300v5.400" stroke="#000" stroke-width="1.100"/></g>
<g shape-rendering="geometricPrecision"><circle cx="878.500" cy="577" r="5.100" stroke="#000" stroke-width="1.150" fill="#f0f0f0"/><path d="M882.500 581l3.300 3.300" stroke="#000" stroke-width="1.800"/><path d="M875.800 577h5.400" stroke="#000" stroke-width="1.100"/></g>
<g shape-rendering="geometricPrecision"><circle cx="878.500" cy="596" r="5.100" stroke="#000" stroke-width="1.150" fill="#f0f0f0"/><path d="M882.500 600l3.300 3.300" stroke="#000" stroke-width="1.800"/><path d="M877 595.500c1.500-2.500 4.500-1 4 1.500c-.3 1.500-1.500 2-2.500 2" stroke="#0000c0" stroke-width="1.100"/><path d="M875.300 593.500v3.500h3.500z" fill="#0000c0"/></g>
<g shape-rendering="geometricPrecision"><circle cx="878.500" cy="615" r="5.100" stroke="#b4b4b4" stroke-width="1.150" fill="#f0f0f0"/><path d="M882.500 619l3.300 3.300" stroke="#b4b4b4" stroke-width="1.800"/><path d="M880 614.500c-1.500-2.500-4.500-1-4 1.500c.3 1.500 1.500 2 2.500 2" stroke="#b4b4b4" stroke-width="1.100"/><path d="M881.700 612.500v3.500h-3.500z" fill="#b4b4b4"/></g>
<g shape-rendering="geometricPrecision"><path d="M75.5 642.5L75.5 631.5" stroke="#8a8a8a" stroke-width=".9"/><path d="M75.5 631.5L77.1 635.0L73.9 635.0z" fill="#8a8a8a"/></g>
<g shape-rendering="geometricPrecision"><path d="M90.0 637.0L101.0 637.0" stroke="#8a8a8a" stroke-width=".9"/><path d="M101.0 637.0L97.5 638.6L97.5 635.4z" fill="#8a8a8a"/></g>
<g shape-rendering="geometricPrecision"><path d="M110.4 639.1L120.6 634.9" stroke="#8a8a8a" stroke-width=".9"/><path d="M120.6 634.9L118.0 637.7L116.8 634.8z" fill="#8a8a8a"/></g>
<g shape-rendering="geometricPrecision"><path d="M131.3 641.2L139.7 632.8" stroke="#8a8a8a" stroke-width=".9"/><path d="M139.7 632.8L138.4 636.4L136.1 634.1z" fill="#8a8a8a"/></g>
<g shape-rendering="geometricPrecision"><path d="M153.0 641.9L158.0 632.1" stroke="#8a8a8a" stroke-width=".9"/><path d="M158.0 632.1L157.8 635.9L155.0 634.5z" fill="#8a8a8a"/></g>
<g shape-rendering="geometricPrecision"><path d="M177.6 642.1L173.4 631.9" stroke="#8a8a8a" stroke-width=".9"/><path d="M173.4 631.9L176.2 634.5L173.3 635.7z" fill="#8a8a8a"/></g>
<g shape-rendering="geometricPrecision"><path d="M199.7 641.2L191.3 632.8" stroke="#8a8a8a" stroke-width=".9"/><path d="M191.3 632.8L194.9 634.1L192.6 636.4z" fill="#8a8a8a"/></g>
<g shape-rendering="geometricPrecision"><path d="M220.5 639.3L210.5 634.7" stroke="#8a8a8a" stroke-width=".9"/><path d="M210.5 634.7L214.4 634.7L213.0 637.6z" fill="#8a8a8a"/></g>
</svg>
<div class="a" id="frame"></div>
</body></html>
